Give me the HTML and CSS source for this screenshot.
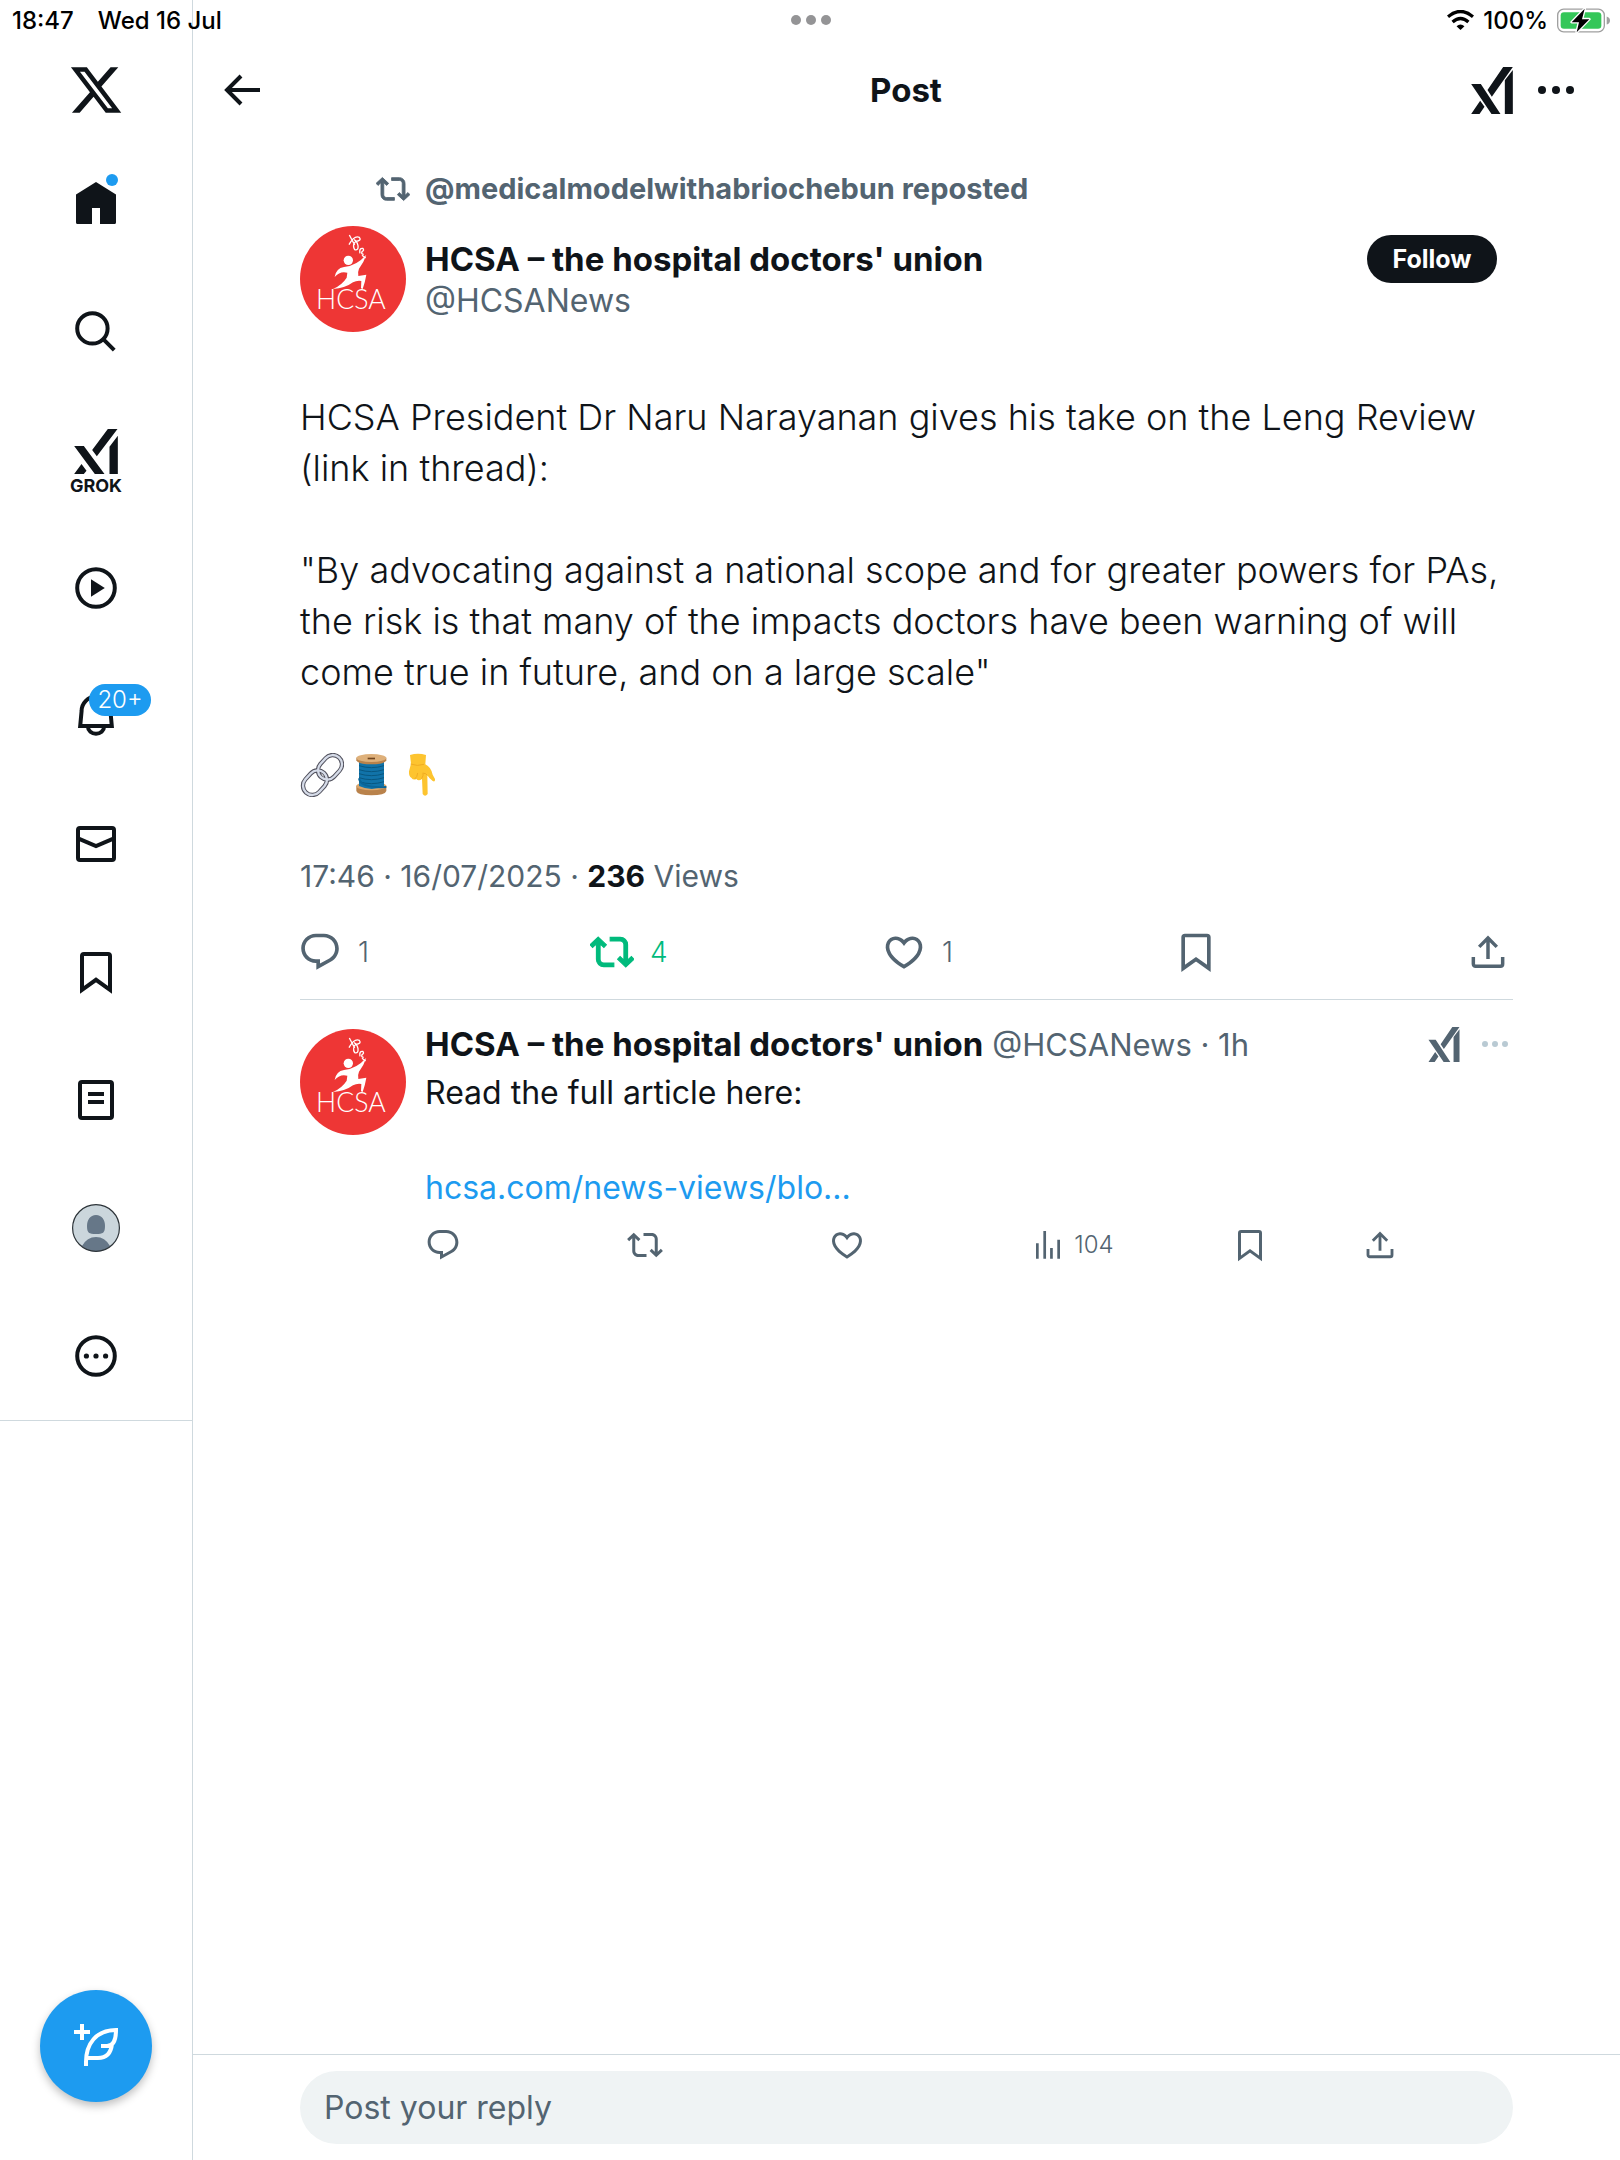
FILE: index.html
```html
<!DOCTYPE html>
<html lang="en">
<head>
    <meta charset="UTF-8">
    <meta content="width=device-width, initial-scale=1.0" name="viewport">
    <title>Post</title>
    <link rel="stylesheet" href="styles.css">
</head>
<body>
<!-- Shared icons -->
<svg class="sprite" aria-hidden="true">
    <symbol id="i-grok" viewBox="0 0 125 141">
        <path d="M96 0h29L62 89 49 69zM101 40l24-31v132h-24zM0 51h29l59 90H61zM27 101l13 18-15 22H0z"/>
    </symbol>
    <symbol id="i-bookmark" viewBox="0 0 24 24">
        <path d="M5 20.9V4a1 1 0 0 1 1-1h12a1 1 0 0 1 1 1v16.9l-7-5z" fill="none" stroke="currentColor" stroke-width="2"/>
    </symbol>
    <symbol id="i-repost" viewBox="0 0 24 24">
        <path d="M4.5 3.88l4.432 4.14-1.364 1.46L5.5 7.55V16c0 1.1.896 2 2 2H13v2H7.5c-2.209 0-4-1.79-4-4V7.55L1.432 9.48.068 8.02 4.5 3.88zM16.5 6H11V4h5.5c2.209 0 4 1.79 4 4v8.45l2.068-1.93 1.364 1.46-4.432 4.14-4.432-4.14 1.364-1.46 2.068 1.93V8c0-1.1-.896-2-2-2z"/>
    </symbol>
    <symbol id="i-comment" viewBox="0 0 24 24">
        <path d="M1.751 10c0-4.42 3.584-8 8.005-8h4.366c4.49 0 8.129 3.64 8.129 8.13 0 2.96-1.607 5.68-4.196 7.11l-8.054 4.46v-3.69h-.067c-4.49.1-8.183-3.51-8.183-8.01zm8.005-6c-3.317 0-6.005 2.69-6.005 6 0 3.37 2.77 6.08 6.138 6.01l.351-.01h1.761v2.3l5.087-2.81c1.951-1.08 3.163-3.13 3.163-5.36 0-3.39-2.744-6.13-6.129-6.13H9.756z"/>
    </symbol>
    <symbol id="i-heart" viewBox="0 0 24 24">
        <path d="M16.697 5.5c-1.222-.06-2.679.51-3.89 2.16l-.805 1.09-.806-1.09C9.984 6.01 8.526 5.44 7.304 5.5c-1.243.07-2.349.78-2.91 1.91-.552 1.12-.633 2.78.479 4.82 1.074 1.97 3.257 4.27 7.129 6.61 3.87-2.34 6.052-4.64 7.126-6.61 1.111-2.04 1.03-3.7.477-4.82-.561-1.13-1.666-1.84-2.908-1.91zm4.187 7.69c-1.351 2.48-4.001 5.12-8.379 7.67l-.503.3-.504-.3c-4.379-2.55-7.029-5.19-8.382-7.67-1.36-2.5-1.41-4.86-.514-6.67.887-1.79 2.647-2.91 4.601-3.01 1.651-.09 3.368.56 4.798 2.01 1.429-1.45 3.146-2.1 4.796-2.01 1.954.1 3.714 1.22 4.601 3.01.896 1.81.846 4.17-.514 6.67z"/>
    </symbol>
    <symbol id="i-share" viewBox="0 0 24 24">
        <path d="M4 14.7v3.9a1.2 1.2 0 0 0 1.2 1.2h13.6a1.2 1.2 0 0 0 1.2-1.2v-3.9M12 15.8V5M7.2 9.2L12 4.4l4.8 4.8" fill="none" stroke="currentColor" stroke-width="1.9"/>
    </symbol>
    <symbol id="i-views" viewBox="0 0 24 24">
        <path d="M4.9 10.9v10.2M9.8 2.7v18.4M14.3 14v7.1M19.1 8.5v12.6" fill="none" stroke="currentColor" stroke-width="1.8"/>
    </symbol>
    <symbol id="i-hcsa" viewBox="0 0 318 318">
        <circle cx="159" cy="159" r="159" fill="#ee3635"/>
        <circle cx="145" cy="103" r="14" fill="#fff"/>
        <path d="M199 86q-8 24-22 42-4 8-2 22l24-4q-4 24-11 43l-5-2 1-22q-14-2-25 4-24 18-60 20 28-13 41-34l2-15q-22-6-38 13 4-26 28-30 38-4 67-37z" fill="#fff"/>
        <path d="M148 27l16 30M147 56q16-29 31-22 8 10-11 12-11 12-3 25 12 3 10-12-3-14-12-18M180 82q-3-16 8-15 6 6-2 10-3 8 5 8M186 88l11 8" fill="none" stroke="#fff" stroke-width="4"/>
    </symbol>
</svg>

<div class="status-bar">
    <div class="status-left"><span>18:47</span><span>Wed 16 Jul</span></div>
    <svg class="status-dots" viewBox="0 0 42 12">
        <circle cx="6" cy="6" r="5"/><circle cx="21" cy="6" r="5"/><circle cx="36" cy="6" r="5"/>
    </svg>
    <div class="status-right">
        <svg class="wifi" viewBox="0 0 82 60">
            <path d="M3 20q38-32 76 0M17 36q24-21 48 0" fill="none" stroke="#000" stroke-width="10"/>
            <path d="M29 49q12-10 24 0L41 60z"/>
        </svg>
        <span>100%</span>
        <svg class="battery" viewBox="0 0 159 74">
            <rect x="2" y="3" width="140" height="68" rx="18" fill="none" stroke="#a0a0a0" stroke-width="4"/>
            <rect x="11" y="12" width="122" height="50" rx="10" fill="#34c759"/>
            <path d="M149 25q10 3 10 12t-10 12z" fill="#a0a0a0"/>
            <path d="M83 2L44 42h22l-7 30 38-39H75z" stroke="#fff" stroke-width="8" stroke-linejoin="round" paint-order="stroke"/>
        </svg>
    </div>
</div>

<div class="app">
    <nav class="sidebar">
        <a class="brand" href="#" aria-label="X">
            <svg class="brand-icon" viewBox="0 0 24 24">
                <path d="M18.244 2.25h3.308l-7.227 8.26 8.502 11.24H16.17l-5.214-6.817L4.99 21.75H1.68l7.73-8.835L1.254 2.25H8.08l4.713 6.231zm-1.161 17.52h1.833L7.084 4.126H5.117z"/>
            </svg>
        </a>
        <div class="nav-list">
            <a class="nav-link" href="#" aria-label="Home">
                <svg class="nav-icon" viewBox="0 0 24 24">
                    <path d="M12 1l10 6.3v13.9a.8.8 0 0 1-.8.8H14v-8h-4v8H2.8a.8.8 0 0 1-.8-.8V7.3z"/>
                </svg>
                <span class="dot"></span>
            </a>
            <a class="nav-link" href="#" aria-label="Search">
                <svg class="nav-icon line" viewBox="0 0 24 24">
                    <circle cx="10.2" cy="10.2" r="7.6"/><path d="M15.6 15.6l5.5 5.5"/>
                </svg>
            </a>
            <a class="nav-link nav-link-grok" href="#">
                <svg class="nav-grok" viewBox="223 147 131 135">
                    <path d="M324 147h29l-62 82-14-19zM329 200l25-33v115h-25zM223 198h29l62 84h-29zM245 252l15 20-8 10h-29z"/>
                </svg>
                <span class="nav-label">GROK</span>
            </a>
            <a class="nav-link" href="#" aria-label="Videos">
                <svg class="nav-icon" viewBox="0 0 24 24">
                    <circle cx="12" cy="12" r="9.4" fill="none" stroke="currentColor" stroke-width="2"/><path d="M9.5 7.6l6.9 4.4-6.9 4.4z"/>
                </svg>
            </a>
            <a class="nav-link" href="#" aria-label="Notifications">
                <svg class="nav-icon line" viewBox="0 0 24 24">
                    <path d="M4.1 17h15.8l-.7-7.5a7.2 7.2 0 0 0-14.4 0zM8 17.5a4 3.4 0 0 0 8 0"/>
                </svg>
                <span class="badge">20+</span>
            </a>
            <a class="nav-link" href="#" aria-label="Messages">
                <svg class="nav-icon line" viewBox="0 0 24 24">
                    <rect x="3" y="4" width="18" height="16" rx="1"/><path d="M3 9.2l9 3.8 9-3.8"/>
                </svg>
            </a>
            <a class="nav-link" href="#" aria-label="Bookmarks">
                <svg class="nav-icon"><use href="#i-bookmark"/></svg>
            </a>
            <a class="nav-link" href="#" aria-label="Lists">
                <svg class="nav-icon line" viewBox="0 0 24 24">
                    <rect x="4" y="3" width="16" height="18" rx="1"/><path d="M8 9h8M8 13h8"/>
                </svg>
            </a>
            <a class="nav-link" href="#" aria-label="Profile">
                <svg class="nav-icon" viewBox="0 0 48 48">
                    <circle cx="24" cy="24" r="23.5" fill="#cbd6dc"/>
                    <path d="M24 11c6 0 9 5 9 11 0 7-2 8-9 8s-9-1-9-8c0-6 3-11 9-11zM10 42q5-9 14-9t14 9q-6 5.5-14 5.5T10 42z" fill="#667788"/>
                    <circle cx="24" cy="24" r="23.4" fill="none" stroke="#2c3338" stroke-width="1.2"/>
                </svg>
            </a>
            <a class="nav-link" href="#" aria-label="More">
                <svg class="nav-icon" viewBox="0 0 24 24">
                    <circle cx="12" cy="12" r="9.4" fill="none" stroke="currentColor" stroke-width="2"/>
                    <circle cx="7.2" cy="12" r="1.3"/><circle cx="12" cy="12" r="1.3"/><circle cx="16.8" cy="12" r="1.3"/>
                </svg>
            </a>
        </div>
        <button class="compose" aria-label="New post">
            <svg class="compose-icon" viewBox="0 0 48 48">
                <path d="M10 2v16M2 10h16M14 44v-4C14 22 24 8 44 8c0 9-2 16-9 16h-6M40 22c-1 9-6 14-14 14H15"/>
            </svg>
        </button>
    </nav>

    <div class="main">
        <header class="header">
            <button class="icon-button" aria-label="Back">
                <svg class="back-icon" viewBox="0 0 36 32">
                    <path d="M36 16H3M17 2L3 16l14 14"/>
                </svg>
            </button>
            <h1 class="title">Post</h1>
            <div class="header-actions">
                <button class="icon-button" aria-label="Grok"><svg class="header-grok"><use href="#i-grok"/></svg></button>
                <button class="icon-button" aria-label="More">
                    <svg class="header-more" viewBox="0 0 36 8">
                        <circle cx="4" cy="4" r="4"/><circle cx="18" cy="4" r="4"/><circle cx="32" cy="4" r="4"/>
                    </svg>
                </button>
            </div>
        </header>

        <main class="content">
            <article class="post">
                <div class="repost">
                    <svg class="repost-icon"><use href="#i-repost"/></svg>
                    <span>@medicalmodelwithabriochebun reposted</span>
                </div>
                <div class="author">
                    <svg class="avatar" viewBox="0 0 318 318">
                        <use href="#i-hcsa"/>
                        <text x="48" y="248" class="logo-text">HCSA</text>
                    </svg>
                    <div class="author-info">
                        <div class="name">HCSA – the hospital doctors' union</div>
                        <div class="handle">@HCSANews</div>
                    </div>
                    <button class="follow">Follow</button>
                </div>
                <div class="post-text">
                    <p>HCSA President Dr Naru Narayanan gives his take on the Leng Review (link in thread):</p>
                    <p>"By advocating against a national scope and for greater powers for PAs, the risk is that many of the impacts doctors have been warning of will come true in future, and on a large scale"</p>
                    <p class="emojis">
                        <svg class="emoji" viewBox="0 0 132 132">
                            <g fill="none" stroke="#50505c" stroke-width="13">
                                <rect x="50" y="15" width="80" height="56" rx="28" transform="rotate(-48 90 43)"/>
                                <rect x="5" y="61" width="80" height="56" rx="28" transform="rotate(-48 45 89)"/>
                            </g>
                            <g fill="none" stroke="#d5dbe8" stroke-width="7">
                                <rect x="50" y="15" width="80" height="56" rx="28" transform="rotate(-48 90 43)"/>
                                <rect x="5" y="61" width="80" height="56" rx="28" transform="rotate(-48 45 89)"/>
                            </g>
                        </svg>
                        <svg class="emoji" viewBox="0 0 132 132">
                            <path d="M22 98h90v16q-4 13-45 13t-45-13z" fill="#b9824b"/>
                            <ellipse cx="67" cy="99" rx="45" ry="13" fill="#dba56a"/>
                            <path d="M30 25h75v74q-36 18-75 0z" fill="#1173a9"/>
                            <path d="M30 38q37 12 75 0M30 50q37 12 75 0M30 62q37 12 75 0M30 74q37 12 75 0M30 86q37 12 75 0" fill="none" stroke="#085780" stroke-width="3"/>
                            <path d="M30 76q5 30 82 26" fill="none" stroke="#0a6598" stroke-width="6"/>
                            <path d="M22 14h90v8q-4 12-45 12T22 22z" fill="#b9824b"/>
                            <ellipse cx="67" cy="15" rx="45" ry="12" fill="#deb07a"/>
                            <path d="M56 14h22v5H56z" fill="#70451f"/>
                        </svg>
                        <svg class="emoji" viewBox="0 0 132 132">
                            <path d="M36 6q24-8 48 0l-2 28q17 8 22 31l7 13q1 10-7 6-10-7-16-17l1 56q-8 10-15 0l-2-45q-10 8-17 0-9 5-15-4-8-4-7-19l6-23z" fill="#fdc42f"/>
                            <path d="M38 33q20 8 40 1M50 78q8-6 9-18M71 77q6-9 4-18M88 67q-4-7-12-6" fill="none" stroke="#f0ac22" stroke-width="3"/>
                        </svg>
                    </p>
                </div>
                <div class="meta">17:46 · 16/07/2025 · <strong>236</strong> Views</div>
                <div class="actions">
                    <button class="action" aria-label="Reply"><svg class="action-icon"><use href="#i-comment"/></svg>1</button>
                    <button class="action reposted" aria-label="Repost"><svg class="action-icon"><use href="#i-repost"/></svg>4</button>
                    <button class="action" aria-label="Like"><svg class="action-icon"><use href="#i-heart"/></svg>1</button>
                    <button class="action" aria-label="Bookmark"><svg class="action-icon"><use href="#i-bookmark"/></svg></button>
                    <button class="action last" aria-label="Share"><svg class="action-icon"><use href="#i-share"/></svg></button>
                </div>
            </article>

            <article class="reply">
                <svg class="avatar" viewBox="0 0 318 318">
                    <use href="#i-hcsa"/>
                    <text x="48" y="248" class="logo-text">HCSA</text>
                </svg>
                <div class="reply-body">
                    <div class="reply-head">
                        <span class="name">HCSA – the hospital doctors' union</span>
                        <span class="handle">@HCSANews · 1h</span>
                        <button class="icon-button reply-grok-button" aria-label="Grok"><svg class="reply-grok"><use href="#i-grok"/></svg></button>
                        <button class="icon-button" aria-label="More">
                            <svg class="reply-more" viewBox="0 0 28 8">
                                <circle cx="4" cy="4" r="3"/><circle cx="14" cy="4" r="3"/><circle cx="24" cy="4" r="3"/>
                            </svg>
                        </button>
                    </div>
                    <p class="reply-text">Read the full article here:</p>
                    <a class="reply-link" href="#">hcsa.com/news-views/blo...</a>
                    <div class="actions small">
                        <button class="action" aria-label="Reply"><svg class="action-icon"><use href="#i-comment"/></svg></button>
                        <button class="action" aria-label="Repost"><svg class="action-icon"><use href="#i-repost"/></svg></button>
                        <button class="action" aria-label="Like"><svg class="action-icon"><use href="#i-heart"/></svg></button>
                        <button class="action" aria-label="Views"><svg class="action-icon"><use href="#i-views"/></svg>104</button>
                        <button class="action narrow" aria-label="Bookmark"><svg class="action-icon"><use href="#i-bookmark"/></svg></button>
                        <button class="action last" aria-label="Share"><svg class="action-icon"><use href="#i-share"/></svg></button>
                    </div>
                </div>
            </article>
        </main>

        <footer class="reply-bar">
            <input class="reply-input" type="text" placeholder="Post your reply" aria-label="Post your reply">
        </footer>
    </div>
</div>
</body>
</html>
```
FILE: styles.css
```css
* {
    box-sizing: border-box;
    margin: 0;
    padding: 0;
}

body {
    font-family: Inter, "Liberation Sans", sans-serif;
    font-size: 32px;
    color: #0f1419;
    background-color: #fff;
}

svg {
    display: block;
    flex-shrink: 0;
    fill: currentColor;
}

button {
    font-family: inherit;
    color: inherit;
    background: none;
    border: none;
    cursor: pointer;
}

a {
    color: inherit;
    text-decoration: none;
}

.sprite {
    position: absolute;
    width: 0;
    height: 0;
}

.logo-text {
    font-family: Lato, sans-serif;
    font-size: 80px;
    font-weight: 300;
    fill: #fff;
}

/* Status bar, lies over the app */
.status-bar {
    position: absolute;
    top: 0;
    left: 0;
    right: 0;
    display: grid;
    grid-template-columns: 1fr auto 1fr;
    align-items: center;
    height: 40px;
    padding: 0 10px 0 12px;
    font-size: 24px;
    font-weight: 500;
    color: #000;
}

.status-left {
    display: flex;
    gap: 24px;
}

.status-dots {
    width: 42px;
    height: 12px;
    color: #949496;
}

.status-right {
    display: flex;
    align-items: center;
    justify-content: flex-end;
    gap: 9px;
}

.wifi {
    width: 27px;
    height: 20px;
}

.battery {
    width: 53px;
    height: 25px;
}

/* Layout */
.app {
    display: flex;
    min-height: 100vh;
}

.sidebar {
    display: flex;
    flex-direction: column;
    width: 193px;
    padding-top: 40px;
    border-right: 1px solid #cfd9de;
}

.main {
    display: flex;
    flex: 1;
    flex-direction: column;
    padding-top: 40px;
}

/* Sidebar */
.brand {
    display: flex;
    align-items: center;
    justify-content: center;
    height: 100px;
}

.brand-icon {
    width: 56px;
    height: 56px;
}

.nav-list {
    border-bottom: 1px solid #cfd9de;
}

.nav-link {
    position: relative;
    display: flex;
    flex-direction: column;
    align-items: center;
    justify-content: center;
    height: 128px;
}

.nav-icon {
    width: 48px;
    height: 48px;
}

.line {
    fill: none;
    stroke: currentColor;
    stroke-width: 2;
}

.nav-link-grok {
    padding-top: 6px;
}

.nav-grok {
    width: 44px;
    height: 45px;
}

.nav-label {
    font-size: 18px;
    font-weight: 700;
    line-height: 24px;
}

.dot {
    position: absolute;
    top: 34px;
    left: 106px;
    width: 12px;
    height: 12px;
    border-radius: 50%;
    background-color: #1d9bf0;
}

.badge {
    position: absolute;
    top: 32px;
    left: 89px;
    width: 62px;
    border-radius: 16px;
    background-color: #1d9bf0;
    color: #fff;
    font-size: 24px;
    font-weight: 350;
    line-height: 32px;
    text-align: center;
}

.compose {
    display: flex;
    align-items: center;
    justify-content: center;
    width: 112px;
    height: 112px;
    margin: auto auto 58px;
    border-radius: 50%;
    background-color: #1d9bf0;
    box-shadow: 0 4px 8px rgba(0, 0, 0, 0.25);
}

.compose-icon {
    width: 48px;
    height: 48px;
    fill: none;
    stroke: #fff;
    stroke-width: 4;
}

/* Header */
.header {
    display: grid;
    grid-template-columns: 1fr auto 1fr;
    align-items: center;
    height: 100px;
    padding: 0 46px 0 31px;
}

.icon-button {
    display: flex;
    align-items: center;
}

.back-icon {
    width: 36px;
    height: 32px;
    fill: none;
    stroke: currentColor;
    stroke-width: 4;
}

.title {
    margin-left: 14px;
    font-size: 33px;
    font-weight: 700;
}

.header-actions {
    display: flex;
    justify-content: flex-end;
    gap: 25px;
}

.header-grok {
    width: 42px;
    height: 47px;
}

.header-more {
    width: 36px;
    height: 8px;
}

/* Post */
.content {
    flex: 1;
    padding: 28px 7.5% 0;
}

.post {
    padding-bottom: 25px;
    border-bottom: 1px solid #cfd9de;
}

.repost {
    display: flex;
    align-items: center;
    gap: 15px;
    height: 41px;
    margin-bottom: 17px;
    padding-left: 76px;
    color: #536471;
    font-size: 29px;
    font-weight: 650;
}

.repost-icon {
    width: 34px;
    height: 34px;
    stroke: currentColor;
    stroke-width: 0.6;
}

.author {
    display: flex;
    gap: 19px;
}

.avatar {
    width: 106px;
    height: 106px;
}

.author-info {
    flex: 1;
    padding-top: 12px;
    line-height: 42px;
}

.name {
    font-size: 33px;
    font-weight: 680;
}

.handle {
    color: #536471;
}

.follow {
    width: 130px;
    height: 48px;
    margin: 9px 16px 0 0;
    border-radius: 24px;
    background-color: #0f1419;
    color: #fff;
    font-size: 25px;
    font-weight: 700;
}

.post-text {
    margin-top: 60px;
    font-size: 36px;
    font-weight: 340;
    line-height: 51px;
}

.post-text p + p {
    margin-top: 51px;
}

.post-text .emojis {
    display: flex;
    align-items: center;
    gap: 5px;
    height: 51px;
}

.emoji {
    width: 44px;
    height: 44px;
}

.meta {
    margin-top: 55px;
    color: #536471;
    font-size: 30px;
    line-height: 42px;
}

.meta strong {
    color: #0f1419;
}

.actions {
    display: flex;
    margin: 33px 3px 0 -2px;
}

.action {
    display: flex;
    flex: 1;
    align-items: center;
    gap: 16px;
    color: #536471;
    font-size: 28px;
    font-weight: 350;
    line-height: 36px;
}

.action-icon {
    width: 44px;
    height: 44px;
}

.last {
    flex: none;
}

.reposted {
    color: #00ba7c;
}

.reposted .action-icon {
    stroke: currentColor;
    stroke-width: 0.6;
}

/* Reply */
.reply {
    display: flex;
    gap: 19px;
    padding-top: 19px;
}

.reply .avatar {
    margin-top: 10px;
}

.reply-body {
    flex: 1;
}

.reply-head {
    display: flex;
    align-items: center;
    height: 50px;
    gap: 9px;
}

.reply-head .handle {
    font-size: 31px;
}

.reply-grok-button {
    margin: 0 12px 0 auto;
}

.reply-grok {
    width: 32px;
    height: 35px;
    color: #536471;
}

.reply-more {
    width: 28px;
    height: 8px;
    margin-right: 4px;
    color: #b9cad3;
}

.reply-text {
    line-height: 48px;
    margin-bottom: 47px;
}

.reply-link {
    display: block;
    line-height: 47px;
    color: #1d9bf0;
}

.small {
    margin: 16px 115px 0 0;
}

.small .action {
    gap: 8px;
    font-size: 24px;
}

.small .action-icon {
    width: 36px;
    height: 36px;
}

.small .narrow {
    flex: none;
    width: 130px;
}

/* Reply box */
.reply-bar {
    padding: 16px 7.5%;
    border-top: 1px solid #cfd9de;
}

.reply-input {
    display: block;
    width: 100%;
    height: 73px;
    padding: 0 24px;
    border: none;
    border-radius: 37px;
    background-color: #eff3f4;
    color: #0f1419;
    font-family: inherit;
    font-size: 32px;
}

.reply-input::placeholder {
    color: #536471;
    opacity: 1;
}
```
